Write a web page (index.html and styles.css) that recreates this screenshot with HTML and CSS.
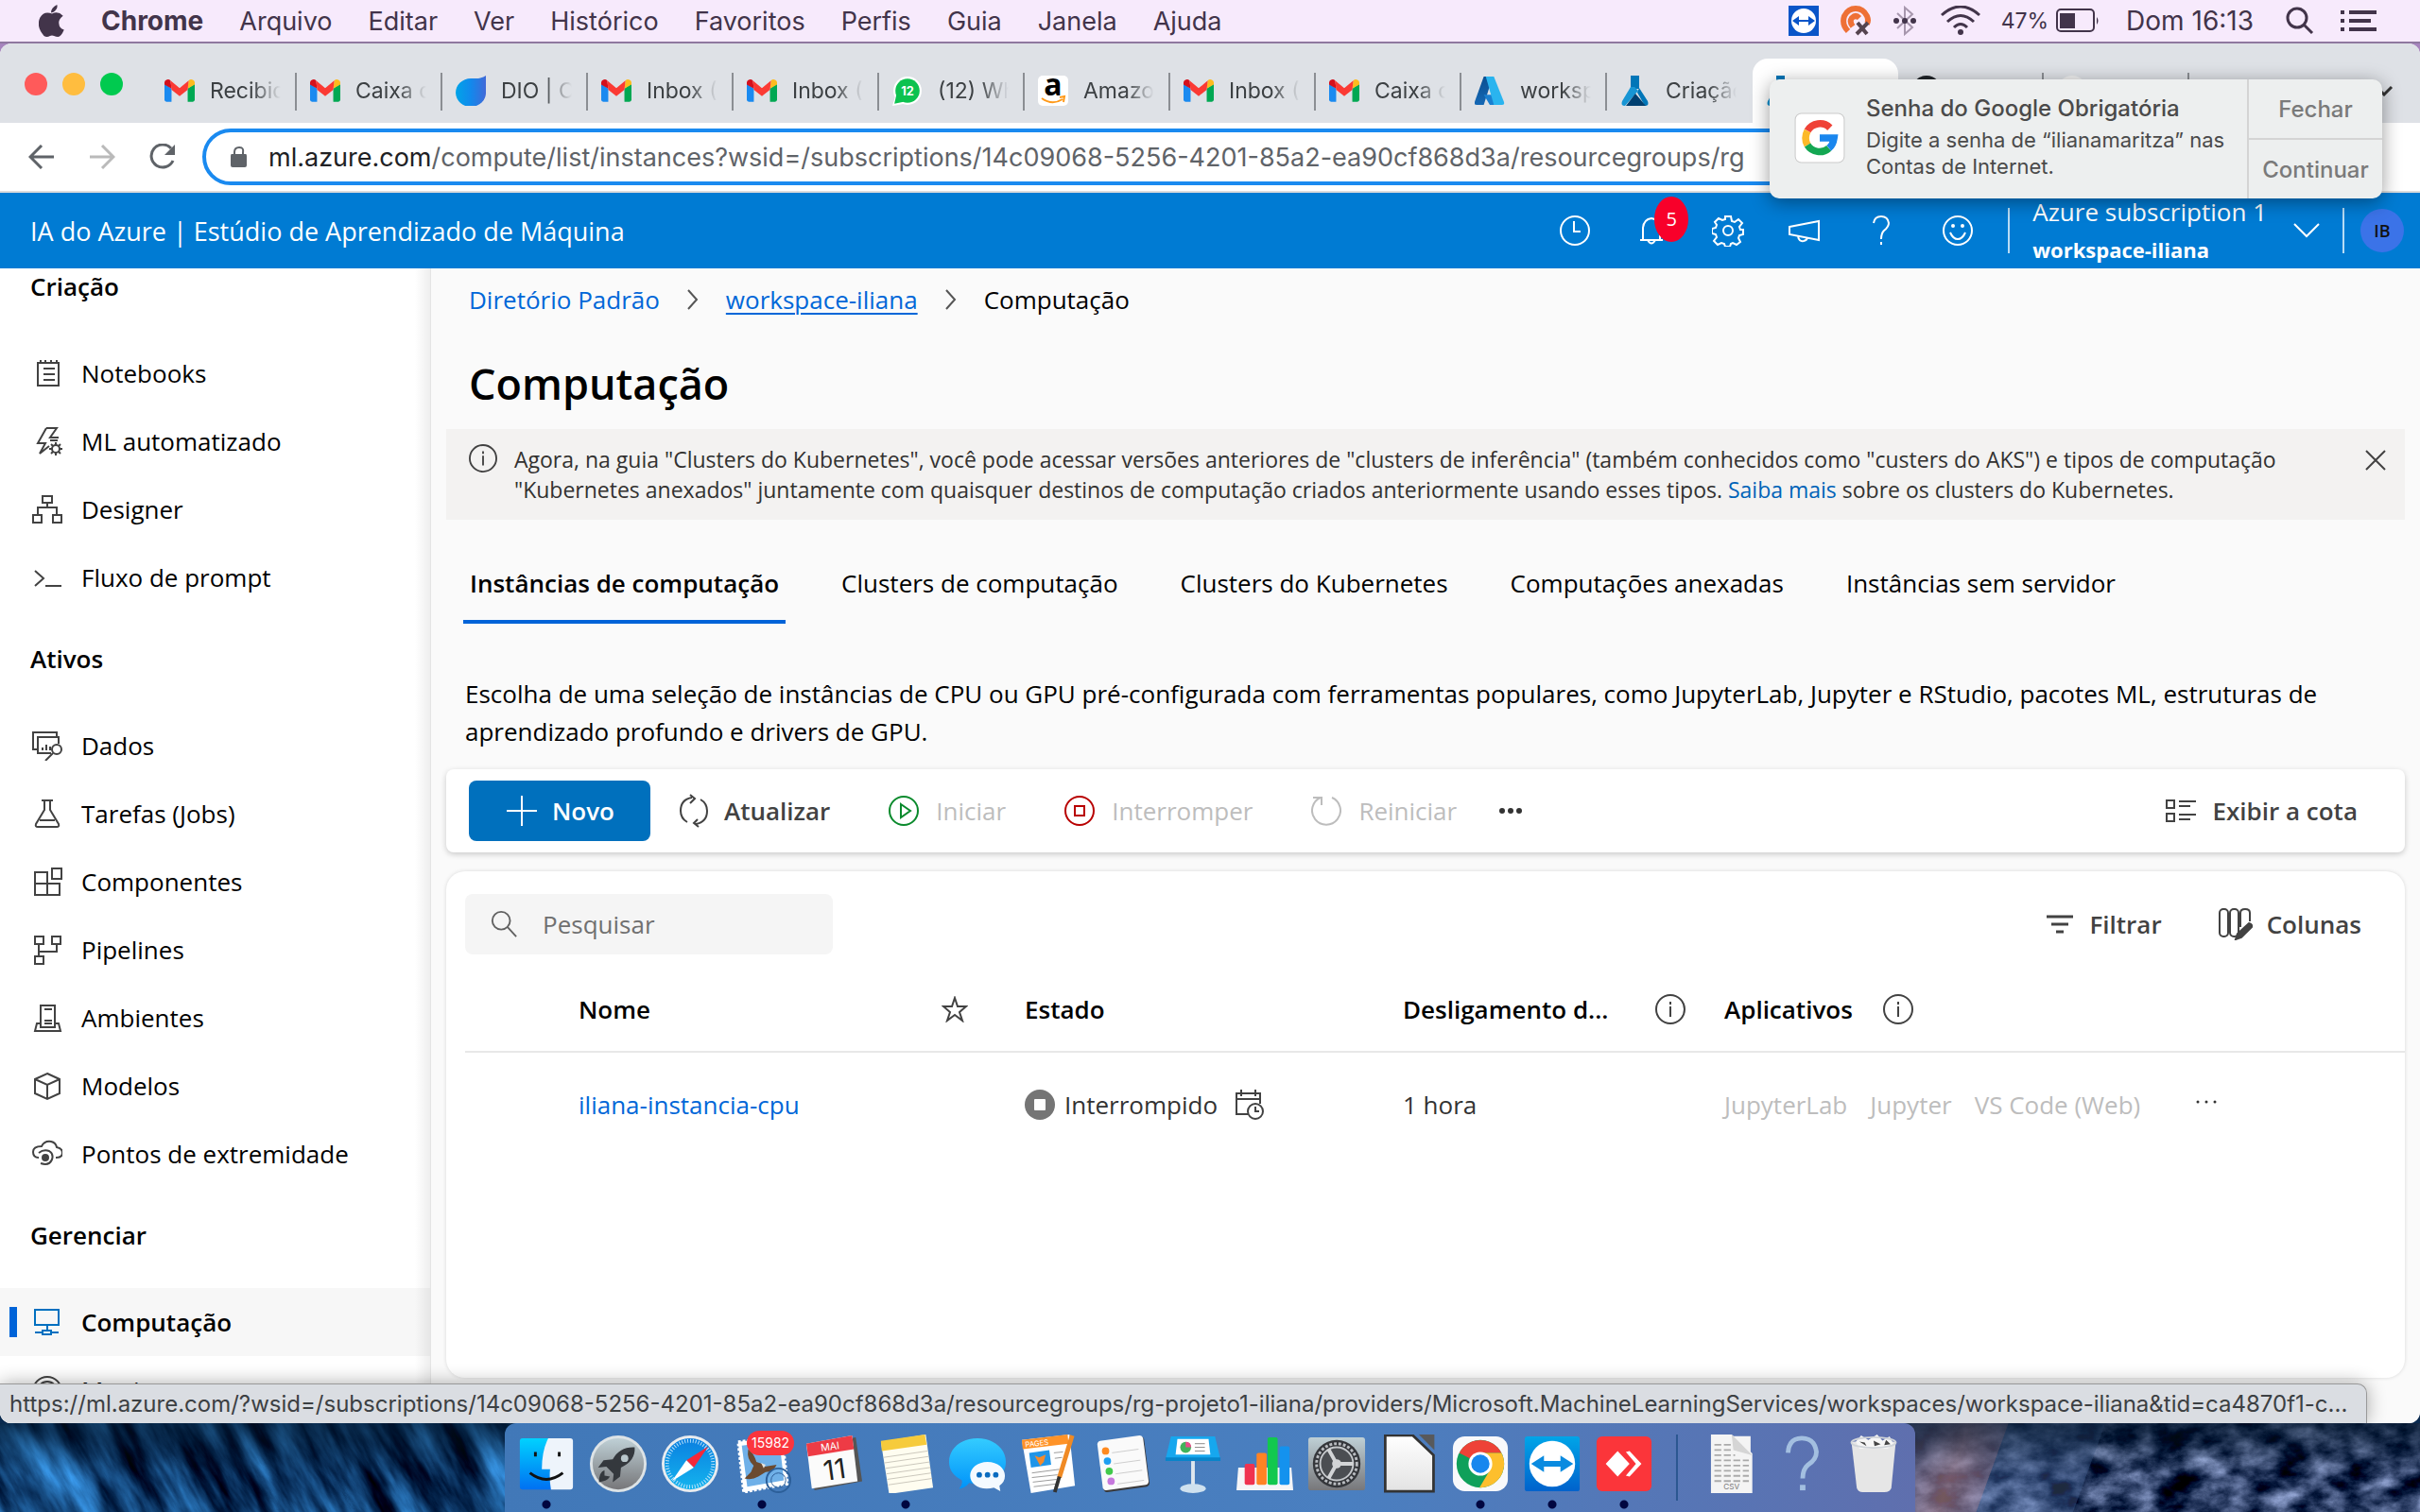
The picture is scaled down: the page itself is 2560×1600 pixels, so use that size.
FILE: index.html
```html
<!DOCTYPE html>
<html lang="pt-BR">
<head>
<meta charset="utf-8">
<title>Computação - Estúdio de Aprendizado de Máquina</title>
<meta name="viewport" content="width=device-width, initial-scale=1">
<link rel="stylesheet" href="styles.css">
</head>
<body>
<svg class="defs" width="0" height="0" aria-hidden="true">
  <defs>
    <linearGradient id="dio" x1="0" x2="1"><stop offset="0" stop-color="#00a4e8"/><stop offset=".5" stop-color="#1289ec"/><stop offset="1" stop-color="#4169d8"/></linearGradient>
    <linearGradient id="blueV" x1="0" y1="0" x2="0" y2="1"><stop offset="0" stop-color="#00d2ff"/><stop offset="1" stop-color="#0071f2"/></linearGradient>
    <linearGradient id="skyV" x1="0" y1="0" x2="0" y2="1"><stop offset="0" stop-color="#00a5e8"/><stop offset="1" stop-color="#0062cc"/></linearGradient>
    <linearGradient id="msgV" x1="0" y1="0" x2="0" y2="1"><stop offset="0" stop-color="#34ccff"/><stop offset="1" stop-color="#0093fa"/></linearGradient>
    <linearGradient id="greyV" x1="0" y1="0" x2="0" y2="1"><stop offset="0" stop-color="#bfd0d6"/><stop offset="1" stop-color="#77777a"/></linearGradient>
    <linearGradient id="paperV" x1="0" y1="0" x2="0" y2="1"><stop offset="0" stop-color="#ffffff"/><stop offset="1" stop-color="#e3e3e3"/></linearGradient>
    <linearGradient id="az" x1="0" y1="0" x2="0" y2="1"><stop offset="0" stop-color="#0a4f91"/><stop offset="1" stop-color="#1568b5"/></linearGradient>
    <linearGradient id="compass" x1="0" y1="0" x2="0" y2="1"><stop offset="0" stop-color="#0a7fe0"/><stop offset="1" stop-color="#14b4ee"/></linearGradient>
  </defs>
  <symbol id="gmail" viewBox="0 0 30 22">
    <path fill="#1a8af0" d="M0 4v16a2 2 0 0 0 2 2h5V9z"/><path fill="#00a853" d="M30 4v16a2 2 0 0 1-2 2h-5V9z"/>
    <path fill="#d5101c" d="M0 4a3.500 3.500 0 0 1 6-3l1 8-7-4z"/><path fill="#fdbb1f" d="M30 4a3.500 3.500 0 0 0-6-3l-1 8 7-4z"/>
    <path fill="#fb3a34" d="M6 1l9 7.500L24 1l-1 9-8 6.500L7 10z"/>
  </symbol>
  <symbol id="flask-color" viewBox="0 0 30 32">
    <path fill="#0076b8" d="M10 0h9v14h-9z"/><path fill="#1795d4" d="M10 12L1 27q-2 5 3 5l14-16-4-4z"/>
    <path fill="#0076b8" d="M19 13l9 14q2 5-3 5l-8-14z"/><path fill="#003f70" d="M5 32l10-13 11 13z"/>
  </symbol>
  <symbol id="notebook" viewBox="0 0 32 32"><path d="M6 5h22v24H6zM12 11h12M12 17h12M12 23h12M9 2v4M14 2v4M20 2v4M26 2v4"/></symbol>
  <symbol id="bolt" viewBox="0 0 32 32"><path d="M15 2h11l-7 10h9M15 2L6 18h8L8 29l10-8M19 15h8"/><circle cx="25" cy="24" r="4"/><path d="M25 17v3M25 28v3M18 24h3M29 24h3M20 19l2 2M28 27l2 2M20 29l2-2M28 21l2-2"/></symbol>
  <symbol id="designer" viewBox="0 0 32 32"><path d="M11 2h10v7H11zM1 22h9v8H1zM22 22h9v8h-9zM16 9v5M6 22v-8h20v8"/></symbol>
  <symbol id="prompt" viewBox="0 0 32 32"><path d="M3 9l9 8-9 8M14 25h17"/></symbol>
  <symbol id="data" viewBox="0 0 32 32"><path d="M6 20H1V2h25v5M20 24H6V7h22v7M11 18v3M15 15v6M19 17v4"/><circle cx="26" cy="20" r="5"/><path d="M22 24l-8 8"/></symbol>
  <symbol id="flask" viewBox="0 0 32 32"><path d="M10 2h12M13 2v10L4 27q-1 3 2 3h20q3 0 2-3L19 12V2M8 23h16"/></symbol>
  <symbol id="components" viewBox="0 0 32 32"><path d="M3 6h13v24H3zM3 18h26v12H3M21 2h10v11H21z"/></symbol>
  <symbol id="pipelines" viewBox="0 0 32 32"><path d="M3 2h9v8H3zM21 2h9v8h-9zM3 23h9v8H3zM7 10v13M7 18h19v-8"/></symbol>
  <symbol id="environments" viewBox="0 0 32 32"><path d="M9 3h15v23H9zM13 7h8M13 19h8M13 22h8M9 22H5L3 30h27l-2-8h-4"/></symbol>
  <symbol id="cube" viewBox="0 0 32 32"><path d="M16 3l13 6v15l-13 6-13-6V9zM3 9l13 6 13-6M16 15v15"/></symbol>
  <symbol id="endpoint" viewBox="0 0 32 32"><path d="M7 20Q1 20 1 14t9-6q3-6 10-5 5 1 6 6 6 1 6 6t-7 5M7 15q5-4 11-2 5 3 3 9-3 7-12 4"/><circle cx="14" cy="20" r="3" fill="currentColor"/></symbol>
  <symbol id="monitor" viewBox="0 0 32 32"><path d="M3 3h25v16H3zM16 19v6M3 27h8v-2h9v2h8M11 27v2h9v-2"/></symbol>
  <symbol id="gauge" viewBox="0 0 32 32"><circle cx="16" cy="17" r="15"/><path d="M6 17a10 10 0 0 1 20 0M16 18l7-7"/></symbol>
  <symbol id="info" viewBox="0 0 32 32"><circle cx="16" cy="16" r="15"/><path d="M16 13v11M16 8v3"/></symbol>
  <symbol id="search" viewBox="0 0 32 32"><circle cx="13" cy="12" r="10"/><path d="M20 19l10 11"/></symbol>
  <symbol id="chev" viewBox="0 0 14 24"><path d="M2 2l9 10-9 10"/></symbol>
</svg>

<div class="desktop">
  <header class="menubar">
    <nav class="menus" aria-label="Menu do sistema">
      <svg class="apple" viewBox="0 0 26 32"><path d="M18 0q1 4-2 6-2 2-4 2 0-5 6-8zM13 9q6-3 11 2-5 4-4 8 0 4 5 6-3 7-6 7-2 0-4-1-2-1-4 0-3 2-6 0-8-9-4-18 4-7 12-4z"/></svg>
      <a class="app" href="#">Chrome</a><a href="#">Arquivo</a><a href="#">Editar</a><a href="#">Ver</a><a href="#">Histórico</a><a href="#">Favoritos</a><a href="#">Perfis</a><a href="#">Guia</a><a href="#">Janela</a><a href="#">Ajuda</a>
    </nav>
    <div class="status">
      <svg width="32" height="32" viewBox="0 0 32 32"><path fill="#0a55c8" d="M0 0h32v32H0z"/><circle cx="16" cy="16" r="13" fill="#fff"/><path fill="#0a55c8" d="M4 16l7-5v4h10v-4l7 5-7 5v-4H11v4z"/></svg>
      <svg class="orange" width="34" height="32" viewBox="0 0 34 32"><path d="M9 27Q2 20 5 11 9 3 17 3t12 8q2 5 0 8M14 22q-4-5-1-9 4-4 8 0" fill="none" stroke="#ee7036" stroke-width="6"/><path d="M19 18l10 12M30 18L18 30" stroke="#55434f" stroke-width="4"/></svg>
      <svg class="bt" width="24" height="32" viewBox="0 0 24 32"><path d="M4 8l16 15-8 7V2l8 7L4 24" fill="none" stroke="#a797ad" stroke-width="2"/><circle cx="3" cy="16" r="3"/><circle cx="12" cy="16" r="3"/><circle cx="21" cy="16" r="3"/></svg>
      <svg class="wifi" width="42" height="32" viewBox="0 0 42 32"><path d="M1 10q20-18 40 0M7 17q14-13 28 0M14 23q7-7 14 0" fill="none" stroke="#42344a" stroke-width="3"/><circle cx="21" cy="28" r="3"/></svg>
      <span class="pct">47%</span>
      <svg width="46" height="26" viewBox="0 0 46 26"><rect x="1" y="1" width="39" height="23" rx="4" fill="none" stroke="#42344a" stroke-width="2"/><path d="M4 5h16v16H4zM43 9q3 4 0 8z"/></svg>
      <span class="clock">Dom 16:13</span>
      <svg class="spot" width="30" height="30" viewBox="0 0 30 30"><circle cx="12" cy="12" r="10" fill="none" stroke="#42344a" stroke-width="3"/><path d="M19 19l9 9" stroke="#42344a" stroke-width="3"/></svg>
      <svg width="38" height="22" viewBox="0 0 38 22"><path d="M0 0h4v4H0zM9 0h29v4H9zM0 9h4v4H0zM9 9h23v4H9zM0 18h4v4H0zM9 18h29v4H9z"/></svg>
    </div>
  </header>

  <div class="window">
    <div class="tabstrip">
      <div class="lights"><i class="red"></i><i class="amber"></i><i class="green"></i></div>
      <div class="tabs">
        <a class="tab" href="#"><svg class="fav"><use href="#gmail"/></svg><span>Recibidos</span></a>
        <a class="tab" href="#"><svg class="fav"><use href="#gmail"/></svg><span>Caixa de</span></a>
        <a class="tab" href="#"><svg class="fav" viewBox="0 0 32 32"><path fill="url(#dio)" d="M32 0v17A16 15 0 1 1 16 3h8q5-1 8-3z"/></svg><span>DIO | Cod</span></a>
        <a class="tab" href="#"><svg class="fav"><use href="#gmail"/></svg><span>Inbox (1)</span></a>
        <a class="tab" href="#"><svg class="fav"><use href="#gmail"/></svg><span>Inbox (1)</span></a>
        <a class="tab" href="#"><svg class="fav" viewBox="0 0 30 30"><circle cx="15" cy="15" r="14" fill="#fff"/><path fill="#fff" d="M0 30l3-10 9 8z"/><circle cx="15" cy="15" r="12" fill="#0cc24f"/><path fill="#0cc24f" d="M2 28l2-9 7 7z"/><text x="15" y="20" font-size="12" font-weight="700" text-anchor="middle" fill="#fff" font-family="Inter, sans-serif">12</text></svg><span>(12) Wha</span></a>
        <a class="tab" href="#"><svg class="fav" viewBox="0 0 32 32"><rect width="32" height="32" rx="5" fill="#fff"/><text x="16" y="21" font-size="32" font-weight="700" text-anchor="middle" fill="#000" font-family="Open Sans, sans-serif">a</text><path d="M4 24q11 8 22 1m-3-2l5-1-1 6" fill="none" stroke="#ff9a1a" stroke-width="2"/></svg><span>Amazon</span></a>
        <a class="tab" href="#"><svg class="fav"><use href="#gmail"/></svg><span>Inbox (1)</span></a>
        <a class="tab" href="#"><svg class="fav"><use href="#gmail"/></svg><span>Caixa de</span></a>
        <a class="tab" href="#"><svg class="fav" viewBox="0 0 30 28"><path fill="url(#az)" d="M9 0h9L9 28H2q-3 0-2-3z"/><path fill="#1a7fd0" d="M9 18h12l4 10H15z"/><path fill="#2ab4ef" d="M11 0h8l10 25q1 3-2 3h-8z"/></svg><span>workspace</span></a>
        <a class="tab last" href="#"><svg class="fav"><use href="#flask-color"/></svg><span>Criação d</span></a>
        <a class="tab active" href="#" aria-label="Computação"><svg class="fav"><use href="#flask-color"/></svg></a>
        <a class="tab" href="#" aria-label="Guia 13"><svg class="fav" viewBox="0 0 30 30"><circle cx="15" cy="15" r="15" fill="#1f2328"/></svg></a>
        <a class="tab" href="#" aria-label="Guia 14"><svg class="fav" viewBox="0 0 30 30"><circle cx="15" cy="15" r="15" fill="#f1f1f1"/></svg></a>
      </div>
      <svg class="tabmenu" width="20" height="12" viewBox="0 0 20 12"><path d="M2 2l8 8 8-8"/></svg>
    </div>

    <div class="toolbar">
      <button class="tb" aria-label="Voltar"><svg width="28" height="26" viewBox="0 0 28 26"><path d="M27 13H3M14 1L2 13l12 12"/></svg></button>
      <button class="tb off" aria-label="Avançar"><svg width="28" height="26" viewBox="0 0 28 26"><path d="M1 13h24M14 1l12 12-12 12"/></svg></button>
      <button class="tb" aria-label="Recarregar"><svg width="28" height="28" viewBox="0 0 28 28"><path d="M25 18a12 12 0 1 1-2-13"/><path class="solid" d="M27 1v11H16z"/></svg></button>
      <div class="address">
        <svg width="17" height="22" viewBox="0 0 17 22"><path class="lock" d="M1 8h15q1 0 1 2v10q0 2-2 2H2q-2 0-2-2V10q0-2 1-2z"/><path d="M4 9V6q0-5 5-5t4 5v3" fill="none" stroke="#5f6368" stroke-width="2"/></svg>
        <div class="url"><b>ml.azure.com</b>/compute/list/instances?wsid=/subscriptions/14c09068-5256-4201-85a2-ea90cf868d3a/resourcegroups/rg</div>
      </div>
    </div>

    <div class="azbar">
      <div class="brand">IA do Azure | Estúdio de Aprendizado de Máquina</div>
      <div class="aztools">
        <button aria-label="Recentes"><svg viewBox="0 0 34 34"><circle cx="17" cy="17" r="15"/><path d="M16 7v11h7"/></svg></button>
        <button class="bell" aria-label="Notificações"><svg viewBox="0 0 34 34"><path d="M5 27h24M8 27V14q1-9 9-10 8 1 9 10v13M13 27q4 7 8 0"/></svg><span class="badge">5</span></button>
        <button aria-label="Configurações"><svg viewBox="0 0 34 34"><circle cx="17" cy="17" r="5"/><path d="M14 2h6l1 5 3 1 4-3 4 4-3 4 1 3h3v5l-4 1-1 3 2 4-4 3-4-2-2 1-1 3h-5l-1-3-3-1-4 2-4-4 3-4-1-3-4-1v-5l4-1 1-3-2-3 4-4 4 2 3-1z"/></svg></button>
        <button aria-label="Novidades"><svg viewBox="0 0 34 34"><path d="M1 13L32 7v20L1 21zM10 23q1 6 6 5 4-1 4-4"/></svg></button>
        <button aria-label="Ajuda"><svg viewBox="0 0 34 34"><path d="M9 9q1-7 8-7t8 7q0 4-5 8-3 3-3 9M17 29v3"/></svg></button>
        <button aria-label="Comentários"><svg viewBox="0 0 34 34"><circle cx="17" cy="17" r="15"/><path d="M9 19q3 7 8 7t8-7"/><circle class="dot" cx="12" cy="12" r="1"/><circle class="dot" cx="22" cy="12" r="1"/></svg></button>
      </div>
      <button class="workspace"><span><span class="sub">Azure subscription 1</span><b>workspace-iliana</b></span><svg width="28" height="16" viewBox="0 0 28 16"><path d="M1 1l13 13L27 1"/></svg></button>
      <button class="avatar">IB</button>
    </div>

    <div class="page">
      <nav class="sidebar" aria-label="Navegação">
        <h2 class="first">Criação</h2>
        <a href="#"><svg><use href="#notebook"/></svg>Notebooks</a>
        <a href="#"><svg><use href="#bolt"/></svg>ML automatizado</a>
        <a href="#"><svg><use href="#designer"/></svg>Designer</a>
        <a href="#"><svg><use href="#prompt"/></svg>Fluxo de prompt</a>
        <h2>Ativos</h2>
        <a href="#"><svg><use href="#data"/></svg>Dados</a>
        <a href="#"><svg><use href="#flask"/></svg>Tarefas (Jobs)</a>
        <a href="#"><svg><use href="#components"/></svg>Componentes</a>
        <a href="#"><svg><use href="#pipelines"/></svg>Pipelines</a>
        <a href="#"><svg><use href="#environments"/></svg>Ambientes</a>
        <a href="#"><svg><use href="#cube"/></svg>Modelos</a>
        <a href="#"><svg><use href="#endpoint"/></svg>Pontos de extremidade</a>
        <h2>Gerenciar</h2>
        <a class="current" href="#" aria-current="page"><svg><use href="#monitor"/></svg>Computação</a>
        <a href="#"><svg><use href="#gauge"/></svg>Monitoramento</a>
      </nav>

      <main class="content">
        <nav class="crumbs" aria-label="Trilha"><a href="#">Diretório Padrão</a><svg><use href="#chev"/></svg><a class="hover" href="#">workspace-iliana</a><svg><use href="#chev"/></svg><span>Computação</span></nav>
        <h1>Computação</h1>
        <div class="notice">
          <svg class="ico"><use href="#info"/></svg>
          <p>Agora, na guia "Clusters do Kubernetes", você pode acessar versões anteriores de "clusters de inferência" (também conhecidos como "custers do AKS") e tipos de computação<br>"Kubernetes anexados" juntamente com quaisquer destinos de computação criados anteriormente usando esses tipos. <a href="#">Saiba mais</a> sobre os clusters do Kubernetes.</p>
          <button aria-label="Fechar"><svg width="22" height="22" viewBox="0 0 22 22"><path d="M1 1l20 20M21 1L1 21"/></svg></button>
        </div>
        <nav class="pivots" aria-label="Tipos de computação"><a class="on" href="#">Instâncias de computação</a><a href="#">Clusters de computação</a><a href="#">Clusters do Kubernetes</a><a href="#">Computações anexadas</a><a href="#">Instâncias sem servidor</a></nav>
        <p class="intro">Escolha de uma seleção de instâncias de CPU ou GPU pré-configurada com ferramentas populares, como JupyterLab, Jupyter e RStudio, pacotes ML, estruturas de aprendizado profundo e drivers de GPU.</p>

        <div class="commands">
          <button class="primary"><svg viewBox="0 0 32 32"><path d="M16 0v32M0 16h32"/></svg>Novo</button>
          <button class="strong refresh"><svg viewBox="0 0 32 36"><path d="M14 4Q2 6 2 18q0 8 7 12M18 32q12-2 12-14 0-8-7-12M12 1l5 4-5 5M20 27l-4 4 5 4"/></svg>Atualizar</button>
          <button class="next" disabled><svg viewBox="0 0 32 32" class="go"><circle cx="16" cy="16" r="15"/><path d="M13 9l10 7-10 7z"/></svg>Iniciar</button>
          <button class="next" disabled><svg viewBox="0 0 32 32" class="halt"><circle cx="16" cy="16" r="15"/><path d="M11 11h10v10H11z"/></svg>Interromper</button>
          <button class="next restart" disabled><svg viewBox="0 0 32 32"><path d="M10 2A15 15 0 1 0 22 2M2 2h9v8"/></svg>Reiniciar</button>
          <button class="more" aria-label="Mais"><svg viewBox="0 0 26 8"><circle cx="4" cy="4" r="3"/><circle cx="13" cy="4" r="3"/><circle cx="22" cy="4" r="3"/></svg></button>
          <button class="strong quota"><svg viewBox="0 0 32 26"><path d="M1 2h8v8H1zM1 16h8v8H1zM14 3h18M14 8h12M14 17h18M14 22h12"/></svg>Exibir a cota</button>
        </div>

        <section class="card">
          <div class="filters">
            <label class="search"><svg><use href="#search"/></svg><input type="search" placeholder="Pesquisar" aria-label="Pesquisar"></label>
            <button class="strong filter"><svg viewBox="0 0 28 20"><path d="M0 2h28M5 10h18M10 18h8"/></svg>Filtrar</button>
            <button class="strong columns"><svg viewBox="0 0 36 34"><rect x="1" y="1" width="9" height="29" rx="4"/><rect x="12" y="1" width="9" height="29" rx="4"/><path d="M23 20V5q0-4 5-4t5 4v9"/><path d="M32 16q4 1 3 4L24 31l-6 2 2-6z" fill="#424242"/></svg>Colunas</button>
          </div>
          <table>
            <colgroup><col class="c0"><col class="c1"><col class="c2"><col class="c3"><col class="c4"><col></colgroup>
            <thead><tr><td></td><th><div class="cell name">Nome<svg class="star" viewBox="0 0 28 28"><path d="M14 2l3 9h9l-7 6 3 9-8-6-8 6 3-9-7-6h9z"/></svg></div></th><th>Estado</th><th><div class="cell shut">Desligamento d...<svg class="ico"><use href="#info"/></svg></div></th><th><div class="cell apps">Aplicativos<svg class="ico"><use href="#info"/></svg></div></th><td></td></tr></thead>
            <tbody><tr><td></td><td><a href="#">iliana-instancia-cpu</a></td><td><div class="cell state"><svg class="ico" viewBox="0 0 32 32"><circle cx="16" cy="16" r="16" fill="#757575" stroke="none"/><rect x="10" y="10" width="12" height="12" rx="1" fill="#fff" stroke="none"/></svg>Interrompido<svg class="ico cal" viewBox="0 0 32 32"><path d="M14 26H2V4h25v11M2 10h25M7 0v7M22 0v7"/><circle cx="22" cy="23" r="8"/><path d="M22 18v5h4"/></svg></div></td><td>1 hora</td><td><div class="cell links"><span>JupyterLab</span><span>Jupyter</span><span>VS Code (Web)</span></div></td><td><button class="rowmore" aria-label="Mais opções"><svg width="24" height="6" viewBox="0 0 24 6"><circle cx="3" cy="3" r="1.500"/><circle cx="12" cy="3" r="1.500"/><circle cx="21" cy="3" r="1.500"/></svg></button></td></tr></tbody>
          </table>
        </section>
      </main>
    </div>
    <div class="linkstatus">https://ml.azure.com/?wsid=/subscriptions/14c09068-5256-4201-85a2-ea90cf868d3a/resourcegroups/rg-projeto1-iliana/providers/Microsoft.MachineLearningServices/workspaces/workspace-iliana&amp;tid=ca4870f1-c...</div>
  </div>

  <div class="shelf">
    <svg class="rock" width="100%" height="100%" aria-hidden="true">
      <defs>
        <filter id="rockL" x="0" y="0" width="100%" height="100%" color-interpolation-filters="sRGB"><feTurbulence type="fractalNoise" baseFrequency=".035 .009" numOctaves="6" seed="8"/><feColorMatrix values=".5 0 0 0 -.18  1.100 0 0 0 -.29  1.500 0 0 0 -.29  0 0 0 0 1"/></filter>
        <filter id="rockR" x="0" y="0" width="100%" height="100%" color-interpolation-filters="sRGB"><feTurbulence type="fractalNoise" baseFrequency=".025 .04" numOctaves="6" seed="4"/><feColorMatrix values="1.300 0 0 0 -.47  1.300 0 0 0 -.400  1.400 0 0 0 -.3  0 0 0 0 1"/></filter>
        <linearGradient id="cliff" x1="0" x2="1" y1="0" y2="0"><stop offset="0" stop-color="#6a6a90"/><stop offset=".6" stop-color="#c0929c"/><stop offset="1" stop-color="#8d7a95"/></linearGradient>
        <linearGradient id="shade" x1="0" x2="0" y1="0" y2="1"><stop offset="0" stop-color="#001428" stop-opacity=".6"/><stop offset=".6" stop-color="#001428" stop-opacity="0"/></linearGradient>
      </defs>
      <g transform="skewX(28)"><rect x="-60" width="55%" height="100%" filter="url(#rockL)"/></g>
      <rect x="50%" width="50%" height="100%" filter="url(#rockR)"/>
      <g transform="skewX(-20)"><rect x="79%" width="4%" height="100%" fill="url(#cliff)" opacity=".6"/><rect x="83%" width="4%" height="100%" fill="#4a6a9c" opacity=".4"/></g>
      <rect width="100%" height="100%" fill="url(#shade)"/>
    </svg>
    <nav class="dock" aria-label="Dock">
      <a class="run" href="#"><svg viewBox="0 0 64 64"><path fill="url(#blueV)" d="M6 4h30q-7 14-7 32h9v24H6q-3 0-3-3V7q0-3 3-3z"/><path fill="#eef4fb" d="M34 4h24q3 0 3 3v50q0 3-3 3H37q-2-12-1-22h-9q0-20 7-34z"/><path d="M20 19v5M46 19v5M14 42q18 14 36 0" fill="none" stroke="#111" stroke-width="3"/></svg></a>
      <a href="#"><svg viewBox="0 0 64 64"><circle cx="32" cy="32" r="31" fill="#dde3e6"/><circle cx="32" cy="32" r="28" fill="url(#greyV)"/><path fill="#34383d" d="M50 14Q34 13 26 27l-10 1-6 8 9-1 8 8-1 9 8-6 1-10Q51 29 50 14zM17 39q-6 2-6 13 9-1 12-6l-6-1z"/><circle cx="39" cy="26" r="4" fill="#b8c6cb"/></svg></a>
      <a href="#"><svg viewBox="0 0 64 64"><circle cx="32" cy="32" r="31" fill="#e9ecef"/><circle cx="32" cy="32" r="28" fill="url(#compass)"/><circle cx="32" cy="32" r="25" fill="none" stroke="#bfe3fa" stroke-width="4" stroke-dasharray="1 2"/><path fill="#f5283a" d="M52 13L28 28l8 8z"/><path fill="#fff" d="M12 51l16-23 8 8z"/></svg></a>
      <a class="run mail" href="#"><svg viewBox="0 0 64 64"><path d="M6 8l48-6 6 52-48 9z" fill="#fff" stroke="#fff" stroke-width="3" stroke-dasharray="3 2"/><path fill="#6fb0e8" d="M10 12l41-5 5 43-40 7z"/><path fill="#6b4a30" d="M17 16q6 4 9 14l6 2 3 3 13-2q-3 8-12 8l-8 5q-7 4-15 2l7-7 3-7q-8-7-6-18z"/><path fill="#e8e4dc" d="M31 31l5 2-2 4z"/><circle cx="50" cy="50" r="13" fill="none" stroke="#2c5f99" stroke-width="2"/><circle cx="50" cy="50" r="8" fill="none" stroke="#2c5f99"/></svg><span class="count">15982</span></a>
      <a href="#"><svg viewBox="0 0 64 64"><path fill="#555" d="M3 12l53-9 7 48-52 10z"/><path fill="#fbfbfb" d="M2 10l50-9 6 50-50 8z"/><path fill="#ee3b45" d="M2 10l50-9 2 15-50 8z"/><text x="28" y="17" font-size="11" text-anchor="middle" fill="#fff" font-family="Inter, sans-serif" transform="rotate(-8 28 14)">MAI</text><text x="33" y="49" font-size="30" text-anchor="middle" fill="#222" font-family="Inter, sans-serif" transform="rotate(-8 32 40)">11</text></svg></a>
      <a class="run" href="#"><svg viewBox="0 0 64 64"><path fill="#fffdf0" d="M5 8L54 0l8 58-48 7z"/><path fill="#f6cb3c" d="M5 7l48-7 2 11-49 7z"/><path d="M8 25l48-7M9 31l48-7M10 37l48-7M11 43l48-7M12 49l48-7M13 55l48-7" stroke="#c9c6bb"/></svg></a>
      <a href="#"><svg viewBox="0 0 64 64"><path fill="url(#msgV)" d="M32 4c17 0 31 11 31 26S49 54 32 54q-5 0-9-1-5 6-11 6 4-4 3-9Q1 43 1 30C1 15 15 4 32 4z"/><path fill="#f4faff" d="M43 30c11 0 19 7 19 15q0 7-6 11l1 6-7-4C36 62 24 55 24 45c0-8 8-15 19-15z"/><g fill="#0a6cc0"><circle cx="34" cy="44" r="3"/><circle cx="43" cy="44" r="3"/><circle cx="52" cy="44" r="3"/></g></svg></a>
      <a href="#"><svg viewBox="0 0 64 64"><path fill="#fff" d="M2 6l52-6 6 56-48 8z"/><path fill="#ff9328" d="M2 6l50-6 1 10L3 16z"/><text x="6" y="14" font-size="8" fill="#fff" font-family="Inter, sans-serif" transform="rotate(-7 6 14)">PAGES</text><path fill="#1f95e8" d="M10 20l22-3 2 16-22 3z"/><path fill="#f38a2c" d="M16 23l5 2 7-3-2 8-4 4z"/><path d="M13 42l30-4M13 47l28-3M14 52l26-3M15 57l24-3M37 20l10-1M38 26l8-1" stroke="#999"/><path stroke="#f08a24" stroke-width="5" d="M57 1L43 47"/><path stroke="#333" stroke-width="4" d="M43 46l-5 17"/></svg></a>
      <a href="#"><svg viewBox="0 0 64 64"><path fill="#3a3a3c" d="M10 9l43-7q3 0 4 3l6 48q0 3-3 4l-43 6q-3 0-4-3z"/><path fill="#fafafa" d="M9 7l43-6q3 0 4 3l6 47q0 3-3 4l-43 6q-3 0-4-3L6 11q0-3 3-4z"/><g><circle cx="15" cy="18" r="4" fill="#ff8a1f"/><circle cx="17" cy="29" r="4" fill="#1e9ff2"/><circle cx="19" cy="40" r="4" fill="#41c94b"/><circle cx="21" cy="51" r="4" fill="#c678dd"/></g><path d="M22 20l29-4M24 32l29-4M26 43l29-4M28 54l29-4" stroke="#ccc"/></svg></a>
      <a href="#"><svg viewBox="0 0 64 64"><path fill="#16a7ee" d="M8 2h48l6 25H2z"/><path fill="#0784c9" d="M2 25h60v4H2z"/><path fill="#fff" d="M15 5h34l2 17H13z"/><circle cx="24" cy="14" r="6" fill="#42b35c"/><path fill="#e84d8a" d="M24 14V8q6 0 6 6z"/><path d="M34 10h11M34 14h11M34 18h11" stroke="#888"/><path fill="#dfe7ee" d="M30 29h4v28h-4z"/><ellipse cx="32" cy="59" rx="14" ry="5" fill="#cfe1ef"/></svg></a>
      <a href="#"><svg viewBox="0 0 64 64"><path fill="#f5f5f7" d="M3 36h58l2 25H1z"/><rect x="10" y="32" width="11" height="23" rx="2" fill="#f0324f"/><rect x="23" y="20" width="11" height="35" rx="2" fill="#ff8324"/><rect x="35" y="3" width="11" height="52" rx="2" fill="#12c84e"/><rect x="48" y="13" width="11" height="42" rx="2" fill="#1492ee"/></svg></a>
      <a href="#"><svg viewBox="0 0 64 64"><rect x="1" y="3" width="62" height="58" rx="3" fill="url(#greyV)"/><circle cx="32" cy="32" r="26" fill="#34363a"/><circle cx="32" cy="32" r="22" fill="none" stroke="#b9bcc0" stroke-width="3" stroke-dasharray="3 2"/><circle cx="32" cy="32" r="18" fill="#4b4e52" stroke="#c4c7ca" stroke-width="2"/><path d="M32 32h18M32 32l-9-16M32 32l-9 16" stroke="#d2d4d6" stroke-width="4"/><circle cx="32" cy="32" r="5" fill="#d2d4d6"/></svg></a>
      <a href="#"><svg viewBox="0 0 64 68"><path fill="url(#paperV)" stroke="#333" stroke-width="3" d="M5 1h32l24 23v42H5z"/><path fill="#58595b" d="M44 0h18v18z"/></svg></a>
      <a class="run" href="#"><svg viewBox="0 0 64 64"><rect x="2" y="2" width="60" height="60" rx="13" fill="#f8f9fb"/><circle cx="32" cy="32" r="26" fill="#0fa05a"/><path fill="#ee4237" d="M32 32L9 20A26 26 0 0 1 55 20H32z"/><path fill="#fdbf2d" d="M32 20h23A26 26 0 0 1 31 58l12-20z"/><circle cx="32" cy="32" r="13" fill="#fff"/><circle cx="32" cy="32" r="10" fill="#1787ee"/></svg></a>
      <a class="run" href="#"><svg viewBox="0 0 64 64"><rect x="2" y="2" width="60" height="60" rx="3" fill="url(#skyV)"/><circle cx="32" cy="32" r="25" fill="#fff"/><path fill="#0a8be0" d="M9 32l14-9v6h18v-6l14 9-14 9v-6H23v6z"/></svg></a>
      <a class="run" href="#"><svg viewBox="0 0 64 64"><rect x="2" y="2" width="60" height="60" rx="6" fill="#fb353a"/><path fill="#fff" d="M12 32l13-14 13 14-13 14zM34 19l4-1 13 14-13 14-4-1 11-13z"/></svg></a>
      <i class="rule"></i>
      <a href="#"><svg viewBox="0 0 64 68"><path fill="#f4f4f4" d="M10 0h24l24 22v46H10z"/><path fill="#f4f4f4" d="M34 2h22v26z"/><path fill="#d5d5d5" d="M34 0l2 18 22 6z"/><path d="M14 12h20M14 18h20M14 24h24M14 30h40M14 36h40M14 42h40M14 48h40M14 54h40" stroke="#aaa" stroke-width="2" stroke-dasharray="8 3"/><text x="34" y="64" font-size="9" text-anchor="middle" fill="#777" font-family="Inter, sans-serif">CSV</text></svg></a>
      <a href="#"><svg viewBox="0 0 64 64"><path d="M17 20q1-16 15-16t16 15q0 8-9 14-6 5-6 15" fill="none" stroke="#a3bfe0" stroke-width="5"/><path fill="#a3bfe0" d="M30 55h6v6h-6z"/></svg></a>
      <a href="#"><svg viewBox="0 0 60 66"><path fill="#e6e6e6" d="M5 8h50l-5 52q-1 5-8 5H18q-6 0-7-5z"/><path fill="#f6f6f6" d="M10 8l6-7 8 5 10-6 6 7 8-5 4 8-6 6H14z"/><path fill="#444" d="M14 8l6 1 2 4zM30 7l8 4-7 2zM44 6l5 5-7 1z"/><ellipse cx="30" cy="9" rx="25" ry="6" fill="none" stroke="#cfd3d8" stroke-width="2"/></svg></a>
    </nav>
  </div>

  <aside class="toast">
    <svg class="gtile" viewBox="0 0 50 50"><rect x="1" y="1" width="48" height="48" rx="6" fill="#fff" stroke="#ccc"/><g fill="none" stroke-width="7"><path stroke="#ef4237" d="M13 18a14 14 0 0 1 22-3"/><path stroke="#fcb928" d="M13 32a15 15 0 0 1 0-14"/><path stroke="#14a752" d="M34 35a14 14 0 0 1-21-3"/><path stroke="#1a86ee" d="M25 25h14q-1 7-5 10"/></g></svg>
    <div class="msg"><strong>Senha do Google Obrigatória</strong><p>Digite a senha de “ilianamaritza” nas<br>Contas de Internet.</p></div>
    <div class="acts"><button>Fechar</button><button>Continuar</button></div>
  </aside>
</div>
</body>
</html>
```

FILE: styles.css
```css
* { box-sizing: border-box; }
body { margin: 0; font-family: "Open Sans", "Noto Sans", sans-serif; font-size: 26px; color: #000; }
a { color: inherit; text-decoration: none; }
button { font: inherit; color: inherit; background: none; border: 0; padding: 0; }
p, h1, h2 { margin: 0; }
svg { flex: none; }
.defs { position: absolute; }

.desktop { position: relative; display: flex; flex-direction: column; height: 100vh; overflow: hidden; background: linear-gradient(#a684bd 50%, #0a2a50 50%); }

/* System menu bar */
.menubar { display: flex; justify-content: space-between; align-items: center; height: 46px; padding: 0 46px 0 41px; background: #f7eafc; border-bottom: 2px solid #8f789f; font: 27px Inter, sans-serif; color: #42344a; fill: #42344a; }
.menus { display: flex; align-items: center; gap: 38px; }
.menus .app { font-size: 28px; font-weight: 700; }
.apple { width: 28px; height: 34px; }
.status { display: flex; align-items: center; }
.orange { margin-left: 22px; }
.bt { margin-left: 23px; }
.wifi { margin-left: 26px; }
.pct { margin: 0 8px 0 22px; font-size: 23px; }
.clock { margin: 0 34px 0 28px; font-size: 28px; }
.spot { margin-right: 28px; }

/* Browser window */
.window { position: relative; flex: 1; min-height: 0; display: flex; flex-direction: column; border-radius: 12px; overflow: hidden; background: #fafafa; }
.tabstrip { display: flex; align-items: flex-end; height: 84px; flex: none; background: #dee1e6; padding-right: 28px; }
.lights { display: flex; gap: 16px; padding: 31px 0 29px 26px; width: 160px; }
.lights i { width: 24px; height: 24px; border-radius: 50%; }
.red { background: #ff5a5a; }
.amber { background: #ffbd3f; }
.green { background: #00ca4f; }
.tabs { display: flex; flex: 1; min-width: 0; }
.tab { display: flex; align-items: center; gap: 16px; width: 154px; height: 68px; padding-left: 14px; font: 23px Inter, sans-serif; color: #3c4043; background: linear-gradient(#8b8e93, #8b8e93) right 15px / 2px 40px no-repeat; }
.tab span { flex: 1; margin-right: 17px; overflow: hidden; white-space: nowrap; -webkit-mask-image: linear-gradient(90deg, #000 60%, transparent); mask-image: linear-gradient(90deg, #000 60%, transparent); }
.tab.last { background: none; }
.tab.active { background: #fff; border-radius: 16px 16px 0 0; }
.fav { width: 32px; height: 32px; }
.tabmenu { margin-bottom: 28px; fill: none; stroke: #333; stroke-width: 3; }

.toolbar { display: flex; align-items: center; gap: 36px; height: 74px; flex: none; padding: 0 140px 0 30px; background: #fff; border-bottom: 2px solid #dcdcdc; }
.tb svg { display: block; fill: none; stroke: #5f6368; stroke-width: 3; }
.tb .solid { fill: #5f6368; stroke: none; }
.tb.off svg { stroke: #bababa; }
.address { flex: 1; min-width: 0; display: flex; align-items: center; gap: 23px; height: 60px; padding-left: 26px; border: 4px solid #1a8af0; border-radius: 30px; }
.toolbar .address { margin-left: -8px; }
.lock { fill: #5f6368; }
.url { overflow: hidden; white-space: nowrap; font: 27px Inter, sans-serif; color: #5f6368; }
.url b { font-weight: 400; color: #202124; }

/* Azure header */
.azbar { display: flex; align-items: center; height: 80px; flex: none; padding: 0 17px 0 32px; background: #007bd3; color: #fff; }
.brand { font-size: 27px; flex: 1; }
.aztools { display: flex; gap: 47px; padding-right: 36px; }
.aztools svg { display: block; width: 34px; height: 34px; fill: none; stroke: #fff; stroke-width: 2; }
.aztools .dot { fill: #fff; }
.bell { position: relative; }
.badge { position: absolute; left: 20px; top: -19px; width: 36px; height: 48px; border-radius: 50%; background: #f8002a; font-size: 20px; line-height: 48px; }
.workspace { display: flex; align-items: center; gap: 28px; height: 48px; padding: 0 24px; border-left: 2px solid #b8dcf5; border-right: 2px solid #b8dcf5; text-align: left; }
.workspace > span { display: grid; font-size: 22px; line-height: 40px; }
.workspace .sub { font-size: 26px; }
.workspace svg { fill: none; stroke: #fff; stroke-width: 2; }
.avatar { width: 46px; height: 46px; margin-left: 17px; border-radius: 50%; background: #3b73e8; color: #111; font-size: 18px; font-weight: 600; }

/* Page */
.page { flex: 1; min-height: 0; display: flex; background: #fafafa; }
.sidebar { width: 456px; flex: none; background: linear-gradient(270deg, #0001, #0000 16px) #fff; border-right: 1px solid #e4e4e4; overflow: hidden; }
.sidebar h2 { height: 106px; padding-left: 32px; font-size: 26px; font-weight: 600; line-height: 100px; }
.sidebar .first { height: 75px; line-height: 38px; }
.sidebar a { display: flex; align-items: center; gap: 20px; height: 72px; padding-left: 34px; }
.sidebar svg { width: 32px; height: 32px; fill: none; stroke: #424242; stroke-width: 2; color: #424242; }
.sidebar .current { background: linear-gradient(#0063d8, #0063d8) 10px center / 8px 32px no-repeat, #00000008; font-weight: 600; }
.sidebar .current svg { stroke: #0070c0; }

.content { flex: 1; min-width: 0; display: flex; flex-direction: column; padding: 0 16px 48px; }
.crumbs { display: flex; align-items: center; gap: 28px; height: 66px; padding-left: 24px; }
.crumbs a { color: #0067d8; }
.crumbs .hover { text-decoration: underline; text-underline-offset: 4px; text-decoration-thickness: 2px; }
.crumbs svg { width: 14px; height: 24px; fill: none; stroke: #555; stroke-width: 2; }
h1 { padding: 8px 0 0 24px; font-size: 45px; font-weight: 600; line-height: 96px; }
.notice { display: flex; height: 96px; padding: 16px 20px 0 24px; background: #f3f2f1; color: #323130; font-size: 23px; line-height: 32px; }
.notice p { flex: 1; margin-left: 18px; white-space: nowrap; }
.notice a { color: #0063b8; }
.notice button { align-self: flex-start; }
.notice button svg { display: block; margin-top: 6px; stroke: #424242; stroke-width: 2; }
.ico { width: 32px; height: 32px; fill: none; stroke: #424242; stroke-width: 2; }
.notice .ico { width: 30px; height: 30px; }
.pivots { display: flex; gap: 52px; margin-top: 24px; padding-left: 18px; }
.pivots a { height: 86px; padding: 0 7px; line-height: 86px; border-bottom: 4px solid transparent; }
.pivots .on { border-color: #0063d8; font-weight: 600; }
.intro { margin: 54px 0 20px; padding: 0 20px; line-height: 40px; }

.commands { display: flex; align-items: center; height: 88px; flex: none; padding: 0 50px 0 24px; border-radius: 8px; background: #fff; box-shadow: 0 2px 6px #0003; }
.commands button, .filters button { display: flex; align-items: center; gap: 18px; }
.commands svg { width: 32px; height: 32px; fill: none; stroke: #424242; stroke-width: 2; }
.commands .primary { gap: 16px; width: 192px; height: 64px; padding-left: 40px; border-radius: 8px; background: #0070bd; color: #fff; font-weight: 600; }
.primary svg { stroke: #fff; }
.strong { color: #424242; font-weight: 600; }
.commands button:disabled { color: #bdbdbd; }
.commands .refresh { margin-left: 30px; gap: 16px; }
.refresh svg { height: 36px; }
.commands .next { margin-left: 62px; }
.commands .go { stroke: #0a8a2c; }
.commands .halt { stroke: #b80000; }
.restart svg { stroke: #bdbdbd; }
.more { margin-left: 44px; }
.commands .more svg { width: 26px; height: 8px; fill: #333; stroke: none; }
.quota { margin-left: auto; }
.commands .quota svg { height: 26px; }

.card { flex: 1; margin-top: 20px; border-radius: 20px; background: #fff; box-shadow: 0 0 4px #0002; }
.filters { display: flex; align-items: center; padding: 24px 46px 0 20px; }
.filters button { gap: 17px; }
.search { display: flex; align-items: center; gap: 24px; width: 389px; height: 64px; margin-right: auto; padding-left: 26px; border-radius: 8px; background: #f5f5f5; }
.search svg { width: 30px; height: 30px; fill: none; stroke: #616161; stroke-width: 2; }
.search input { width: 260px; border: 0; outline: 0; background: none; font: inherit; }
.search input::placeholder { color: #707070; opacity: 1; }
.filters .strong svg { width: 28px; height: 20px; fill: none; stroke: #424242; stroke-width: 3; }
.filters .columns { margin-left: 60px; gap: 15px; }
.filters .columns svg { width: 36px; height: 34px; stroke-width: 2; }

table { width: calc(100% - 20px); margin: 14px 0 0 20px; border-collapse: collapse; table-layout: fixed; }
th, td { padding: 0; text-align: left; white-space: nowrap; }
th { font-weight: 600; }
thead tr { height: 89px; border-bottom: 2px solid #e8e8e8; }
tbody tr { height: 110px; color: #333; }
.c0 { width: 120px; }
.c1 { width: 472px; }
.c2 { width: 400px; }
.c3 { width: 340px; }
.c4 { width: 498px; }
.cell { display: flex; align-items: center; }
.name, .shut { justify-content: space-between; }
.name { padding-right: 60px; }
.star { width: 28px; height: 28px; fill: none; stroke: #424242; stroke-width: 2; }
.shut { padding-right: 41px; }
.apps { gap: 32px; }
.state { gap: 10px; }
.cal { margin-left: 8px; }
.links { gap: 24px; color: #bdbdbd; }
td a { color: #0067d8; }
.rowmore { display: flex; padding-bottom: 6px; }
.rowmore svg { display: block; fill: #333; }

.linkstatus { position: absolute; left: 0; bottom: 0; max-width: 98%; height: 42px; padding: 0 20px 0 10px; border: 1px solid #999; border-left: 0; border-bottom: 0; border-radius: 0 10px 0 12px; background: #dadde2; box-shadow: 0 0 20px #0005; font: 24px/42px Inter, sans-serif; color: #3c4043; white-space: nowrap; overflow: hidden; }

/* Wallpaper strip and dock */
.shelf { position: relative; display: flex; justify-content: center; height: 94px; flex: none; background: linear-gradient(90deg, #0d4380, #10406f 45%, #3b4470 82%, #0d2f5c); }
.rock { position: absolute; inset: 0; }
.dock { position: relative; display: flex; padding: 0 6px; border-radius: 12px 12px 0 0; background: linear-gradient(90deg, #4178b8, #4a7fc0 60%, #5f6fae); }
.dock a { position: relative; width: 76px; padding: 12px 7px 0; }
.dock svg { display: block; width: 62px; height: 62px; }
.dock .run { background: radial-gradient(circle at 50% 86px, #000640 4px, transparent 5px); }
.rule { width: 36px; margin: 12px 0; background: linear-gradient(#2c5791, #2c5791) center / 2px 100% no-repeat; }
.count { position: absolute; left: 22px; top: 8px; padding: 0 5px; border-radius: 13px; background: #fb353d; color: #fff; font: 14px/26px Inter, sans-serif; }

/* System notification */
.toast { position: absolute; top: 84px; right: 40px; display: flex; width: 648px; height: 126px; border-radius: 10px; background: #edefef; box-shadow: 0 4px 20px #0006; font: 22px/28px Inter, sans-serif; color: #4a4a4a; overflow: hidden; }
.gtile { width: 54px; height: 54px; margin: 35px 22px 0 26px; }
.msg { flex: 1; padding-top: 16px; white-space: nowrap; }
.msg strong { display: block; margin-bottom: 4px; font-size: 24px; font-weight: 500; line-height: 30px; }
.acts { display: grid; width: 143px; border-left: 2px solid #d4d4d4; }
.acts button { padding-top: 2px; color: #7a7a7a; font-size: 24px; font-weight: 500; }
.acts button + button { border-top: 2px solid #d4d4d4; }
```
